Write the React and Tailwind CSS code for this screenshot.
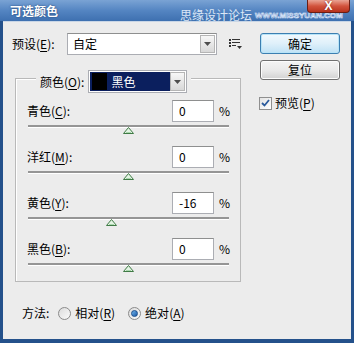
import React from "react";

const rows = [
  { name: "青色", hotkey: "C", value: 0 },
  { name: "洋红", hotkey: "M", value: 0 },
  { name: "黄色", hotkey: "Y", value: -16 },
  { name: "黑色", hotkey: "B", value: 0 },
];

const Hot = ({ text, k, colon = true }) => (
  <span className="whitespace-nowrap">
    {text}(<span className="underline underline-offset-2">{k}</span>){colon ? ":" : ""}
  </span>
);

const DropArrow = ({ className = "" }) => (
  <div
    className={`w-[15px] self-stretch flex items-center justify-center border border-[#b5b5b5] bg-gradient-to-b from-[#f7f7f7] to-[#d8d8d8] ${className}`}
  >
    <svg width="7" height="4" viewBox="0 0 7 4">
      <polygon points="0,0 7,0 3.5,4" fill="#4d4d4d" />
    </svg>
  </div>
);

const Thumb = () => (
  <svg width="11" height="7" viewBox="0 0 11 7">
    <polygon points="5.5,0.5 10.5,6.5 0.5,6.5" fill="#e3f4e3" stroke="#3f7a45" strokeWidth="1" />
    <line x1="3" y1="5.5" x2="8" y2="5.5" stroke="#a9d7ad" />
  </svg>
);

const SliderRow = ({ row }) => {
  const pos = ((row.value + 100) / 200) * 201;
  return (
    <div className="h-[46px] w-[202px]">
      <div className="flex items-center h-[22px]">
        <span className="flex-1">
          <Hot text={row.name} k={row.hotkey} />
        </span>
        <div className="w-[42px] h-[22px] border border-[#abadb3] border-t-[#8e8f8f] bg-white pl-[6px] flex items-center">
          {row.value}
        </div>
        <span className="ml-[5px] w-[10px]">%</span>
      </div>
      <div className="relative mt-[3px] ml-[1px] h-[2px] bg-[#959595] shadow-[0_1px_0_#ffffff]">
        <div className="absolute top-[2px]" style={{ left: pos - 6 }}>
          <Thumb />
        </div>
      </div>
    </div>
  );
};

const Radio = ({ checked }) => (
  <div className="w-[13px] h-[13px] rounded-full border border-[#8a8a8a] bg-gradient-to-br from-[#dcdcdc] to-[#fbfbfb] flex items-center justify-center">
    {checked && (
      <div className="w-[7px] h-[7px] rounded-full bg-gradient-to-br from-[#6fb3ea] to-[#1b5ba8] border border-[#1a4d8c]" />
    )}
  </div>
);

export default function App() {
  return (
    <div className="w-[354px] h-[343px] flex flex-col bg-[#24518b] font-['Noto_Sans_CJK_SC',sans-serif] text-[12px] text-black overflow-hidden">
      {/* title bar */}
      <div className="relative h-[21px] shrink-0 flex items-center overflow-hidden bg-gradient-to-b from-[#7aa3d4] via-[#5485c2] to-[#3e70b0]">
        <span className="ml-[10px] shrink-0 whitespace-nowrap text-white font-bold text-[12px] [text-shadow:0_0_2px_#1c3f70]">
          可选颜色
        </span>
        <span className="ml-[122px] mt-[8px] shrink-0 text-[12px] text-[#dbe7f6] whitespace-nowrap">
          思缘设计论坛
        </span>
        <span className="ml-[3px] mt-[11px] shrink-0 text-[8px] font-bold text-[#3f6fae] [-webkit-text-stroke:0.6px_#e6efff] whitespace-nowrap font-['Liberation_Sans',sans-serif]">
          WWW.MISSYUAN.COM
        </span>
        <div className="absolute right-[4px] top-0 w-[43px] h-[13px] rounded-b-[4px] border border-t-0 border-[#6a1e14] bg-gradient-to-b from-[#e9a495] via-[#d2533d] to-[#b8321c] flex items-center justify-center">
          <span className="text-white font-bold text-[12px] leading-none font-['Liberation_Sans',sans-serif] [text-shadow:0_0_2px_#7a1a0c]">
            X
          </span>
        </div>
      </div>

      {/* client area */}
      <div className="flex-1 mx-[3px] mb-[4px] bg-[#ececec] flex border-t border-[#c9d6e6]">
        {/* left column */}
        <div className="w-[257px] flex flex-col">
          <div className="mt-[11px] ml-[9px] flex items-center h-[22px]">
            <span className="w-[55px]">
              <Hot text="预设" k="E" />
            </span>
            <div className="w-[150px] h-[22px] border border-[#abadb3] border-t-[#8e8f8f] bg-white flex items-stretch p-[1px]">
              <span className="flex-1 pl-[4px] flex items-center">自定</span>
              <DropArrow />
            </div>
            <svg className="ml-[12px]" width="13" height="10" viewBox="0 0 13 10">
              <rect x="0" y="0" width="2" height="2" fill="#333" />
              <rect x="3" y="0" width="8" height="1" fill="#333" />
              <rect x="0" y="3" width="2" height="2" fill="#333" />
              <rect x="3" y="3" width="8" height="1" fill="#333" />
              <rect x="0" y="6" width="2" height="2" fill="#333" />
              <rect x="3" y="6" width="4" height="1" fill="#333" />
              <polygon points="8,7 13,7 10.5,10" fill="#333" />
            </svg>
          </div>

          {/* group box */}
          <div className="mt-[23px] ml-[12px] w-[226px] h-[204px] border border-[#b9b9b9] shadow-[inset_1px_1px_0_#ffffff]">
            <div className="-mt-[9px] ml-[20px] px-[4px] w-fit bg-[#ececec] flex items-center h-[23px]">
              <Hot text="颜色" k="O" />
              <div className="ml-[4px] w-[99px] h-[23px] border border-[#abadb3] bg-white flex items-stretch p-[1px]">
                <div className="flex-1 bg-[#0b1f5e] flex items-center">
                  <div className="ml-[2px] w-[15px] h-[17px] bg-black" />
                  <span className="ml-[4px] text-white">黑色</span>
                </div>
                <DropArrow />
              </div>
            </div>
            <div className="pt-[7px] pl-[11px]">
              {rows.map((row) => (
                <SliderRow key={row.hotkey} row={row} />
              ))}
            </div>
          </div>

          {/* method */}
          <div className="mt-[20px] ml-[19px] flex items-center h-[22px]">
            <span>方法:</span>
            <div className="ml-[9px]">
              <Radio />
            </div>
            <span className="ml-[4px]">
              <Hot text="相对" k="R" colon={false} />
            </span>
            <div className="ml-[13px]">
              <Radio checked />
            </div>
            <span className="ml-[4px]">
              <Hot text="绝对" k="A" colon={false} />
            </span>
          </div>
        </div>

        {/* right column */}
        <div className="w-[80px] flex flex-col">
          <button className="mt-[11px] h-[21px] rounded-[3px] border border-[#3c7fb1] bg-gradient-to-b from-[#f2f9fd] via-[#dff0fa] to-[#bfe2f5] shadow-[inset_0_0_0_1px_#b8e4f8] flex items-center justify-center">
            确定
          </button>
          <button className="mt-[6px] h-[20px] rounded-[3px] border border-[#707070] bg-gradient-to-b from-[#f4f4f4] via-[#eaeaea] to-[#d2d2d2] shadow-[inset_0_0_0_1px_#fcfcfc] flex items-center justify-center">
            复位
          </button>
          <div className="mt-[15px] -ml-[1px] flex items-center h-[16px]">
            <div className="w-[13px] h-[13px] border border-[#8f8f8f] bg-gradient-to-br from-[#e3e3e3] to-white flex items-center justify-center">
              <svg width="9" height="8" viewBox="0 0 9 8">
                <polyline points="1,4 3.5,6.5 8,1" fill="none" stroke="#2a5a9c" strokeWidth="1.8" />
              </svg>
            </div>
            <span className="ml-[3px]">
              <Hot text="预览" k="P" colon={false} />
            </span>
          </div>
        </div>
      </div>
    </div>
  );
}
